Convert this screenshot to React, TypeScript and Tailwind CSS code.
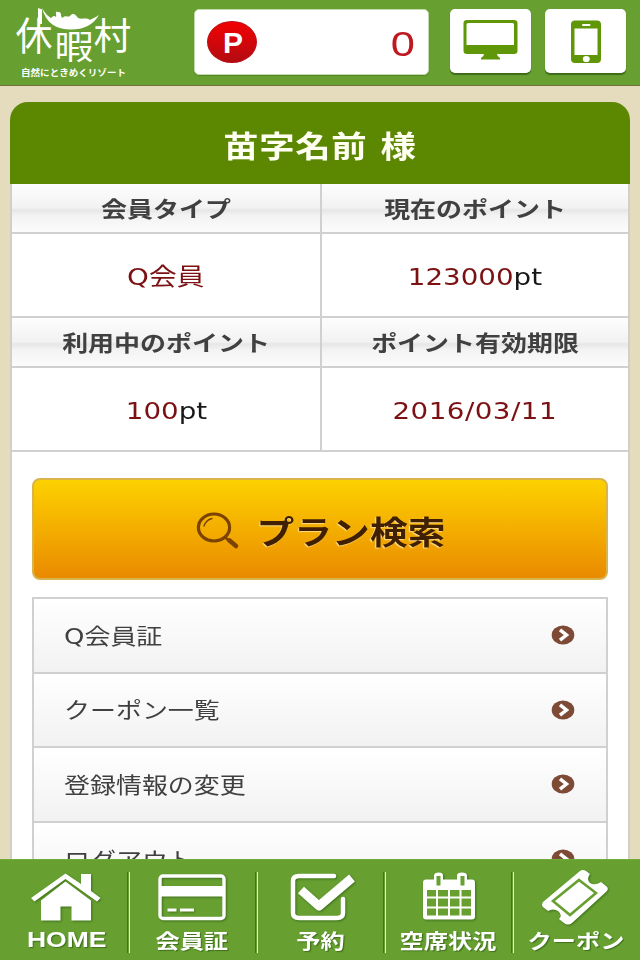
import type { ReactNode } from "react";
import clsx from "clsx";

interface InfoCell {
  label: string;
  value: string;
  unit?: string;
}

const INFO_ROWS: InfoCell[][] = [
  [
    { label: "会員タイプ", value: "Q会員" },
    { label: "現在のポイント", value: "123000", unit: "pt" },
  ],
  [
    { label: "利用中のポイント", value: "100", unit: "pt" },
    { label: "ポイント有効期限", value: "2016/03/11" },
  ],
];

const MENU = ["Q会員証", "クーポン一覧", "登録情報の変更", "ログアウト"];

const NAV = [
  { label: "HOME", icon: <HomeIcon /> },
  { label: "会員証", icon: <CardIcon /> },
  { label: "予約", icon: <CheckIcon /> },
  { label: "空席状況", icon: <CalendarIcon /> },
  { label: "クーポン", icon: <TicketIcon /> },
];

function Logo() {
  return (
    <svg width="180" height="84" viewBox="0 0 180 84" fill="#fff" className="shrink-0">
      <g fontFamily="'Noto Sans CJK JP', sans-serif" fontWeight="400">
        <text transform="translate(15.500 49.500) scale(0.95 1)" fontSize="39">休</text>
        <text transform="translate(54.500 58.500) scale(1.18 1)" fontSize="33">暇</text>
        <text transform="translate(93.500 49.500) scale(1.02 1)" fontSize="37">村</text>
        <text x="21" y="76" fontSize="9" fontWeight="700" textLength="105" lengthAdjust="spacingAndGlyphs">
          自然にときめくリゾート
        </text>
      </g>
      <path d="M38 8L42 9.500V24H38Z" />
      <path d="M42 8C48 19 57 23 70 23C83 23 92 20 99 15C93 25 84 29.500 71 29.500C56 29.500 46 23 42 8Z" />
      <path d="M50 19C53 16 54 15 56 17C57 14 54 11 58 12C62 12 60 14 62 18C66 14 68 18 70 16C73 12 76 15 78 18C82 20 86 17 90 20C84 26 59 27 50 19Z" />
    </svg>
  );
}

function MonitorIcon() {
  return (
    <svg width="56" height="40" viewBox="0 0 56 40" fill="#5f9708">
      <path
        fillRule="evenodd"
        d="M4 0H51Q54.500 0 54.500 3V31Q54.500 34 51 34H4Q.500 34 .500 31V3Q.500 0 4 0ZM5 3Q3.500 3 3.500 4.500V25H51V4.500Q51 3 49.500 3Z"
      />
      <path d="M21 34H34Q34 36.500 37 38V39.500H18V38Q21 36.500 21 34Z" />
    </svg>
  );
}

function PhoneIcon() {
  return (
    <svg width="32" height="44" viewBox="0 0 32 44">
      <rect x="1" y="0.500" width="30" height="42.500" rx="4" fill="#5f9708" />
      <rect x="4.500" y="8.500" width="23" height="26.500" fill="#fff" />
      <rect x="12" y="4" width="8.500" height="2" rx="1" fill="#fff" />
      <ellipse cx="16.300" cy="39" rx="3.500" ry="3.100" fill="#fff" />
    </svg>
  );
}

function SearchIcon() {
  return (
    <svg width="44" height="38" viewBox="0 0 44 38" fill="none" stroke="#7c4300" strokeLinecap="round">
      <ellipse cx="18" cy="15.500" rx="15.600" ry="13.500" strokeWidth="3.200" />
      <path d="M8 14Q10 8 16 6.500" strokeWidth="1.400" />
      <path d="M30 26L33 29" strokeWidth="2.500" />
      <path d="M33.500 28.500L40 34" strokeWidth="4.500" />
    </svg>
  );
}

function ArrowIcon() {
  return (
    <svg width="24" height="20" viewBox="0 0 24 20" fill="none">
      <ellipse cx="12" cy="10" rx="11.300" ry="9.500" fill="#7d4a35" />
      <path d="M9 4.800L15.500 10L9 15.200" stroke="#fff" strokeWidth="3.500" />
    </svg>
  );
}

function HomeIcon() {
  return (
    <svg width="70" height="50" viewBox="-2 0 70 50" fill="#fff" overflow="visible">
      <path d="M34.500 .500L50 11V1H60V18L69.500 25L66 28.500L34.500 6L3.500 28.500L0 25Z" />
      <path d="M34.500 8.500L60 27.500V47.500H40.500V33.500H29.500V47.500H10V27.500Z" />
    </svg>
  );
}

function CardIcon() {
  return (
    <svg width="70" height="50" viewBox="0 0 70 50">
      <rect x="3" y="3" width="64" height="42.500" rx="3" fill="none" stroke="#fff" strokeWidth="3.400" />
      <path d="M2 13H68V23.500H2ZM10.500 35.500H19.500V38.500H10.500ZM23 35.500H37V38.500H23Z" fill="#fff" />
    </svg>
  );
}

function CheckIcon() {
  return (
    <svg width="70" height="50" viewBox="-2 0 70 50" fill="none" stroke="#fff" overflow="visible">
      <path d="M47 3H12Q6 3 6 8V40Q6 45 12 45H50Q56 45 56 40V26" strokeWidth="4.500" strokeLinecap="round" />
      <path d="M14 17L32 33L65 5" strokeWidth="9" strokeLinejoin="round" />
    </svg>
  );
}

function CalendarIcon() {
  return (
    <svg width="70" height="50" viewBox="-1 1.500 70 50" overflow="visible">
      <path
        fill="#fff"
        d="M12 8H20V4Q20 1 25 1Q29 1 29 4V8H43V4Q43 1 48 1Q53 1 53 4V8H58Q61 8 61 11V45Q61 48 58 48H12Q9 48 9 45V11Q9 8 12 8Z"
      />
      <path
        fill="#67a031"
        d="M22.500 4.500H26.500V14H22.500ZM46.500 4.500H50.500V14H46.500ZM13 18.500H22V25H13ZM24 18.500H34V25H24ZM36 18.500H45.500V25H36ZM47.500 18.500H57V25H47.500ZM13 27H22V35H13ZM24 27H34V35H24ZM36 27H45.500V35H36ZM47.500 27H57V35H47.500ZM13 37H22V44H13ZM24 37H34V44H24ZM36 37H45.500V44H36ZM47.500 37H57V44H47.500Z"
      />
    </svg>
  );
}

function TicketIcon() {
  return (
    <svg width="70" height="58" viewBox="1 4 70 58" overflow="visible">
      <path
        fill="#fff"
        d="M40 2Q43 0 46 2L50 5Q46 10 50 14Q55 17 61 13L66 17Q69 19 67 22L32 54Q28 57 24 54L19 50Q23 46 18 42Q13 39 8 42L3 38Q1 36 3 33Z"
      />
      <path d="M39 11L56 24L30 46L13 32Z" fill="#fff" stroke="#67a031" strokeWidth="2.600" />
    </svg>
  );
}

// the type runs wider than its height everywhere in this skin
function Wide({ children, className }: { children: ReactNode; className?: string }) {
  return <span className={clsx("inline-block whitespace-nowrap scale-x-[1.18]", className)}>{children}</span>;
}

function Header() {
  return (
    <header className="flex h-[86px] shrink-0 items-start border-b border-[#72713d] bg-[#67a031]">
      <Logo />
      <div className="ml-[14px] mt-[9px] flex h-[66px] w-[235px] shrink-0 items-center justify-between rounded-[5px] border border-[#c3d9ad] bg-white pl-3 pr-[16px] shadow-[0_1px_1px_#548525]">
        <span className="flex h-[42px] w-[50px] items-center justify-center rounded-[50%] border border-[#b80c13] bg-linear-to-b from-[#f20000] to-[#b30a10] pl-0.5 pt-0.5 font-[Liberation_Sans,sans-serif] text-[30px] font-bold leading-none text-white">
          P
        </span>
        <span className="inline-block scale-x-[1.24] pt-0.5 font-[Liberation_Sans,sans-serif] text-[35px] leading-none text-[#bf1820]">
          0
        </span>
      </div>
      <button className="ml-[21px] mt-[9px] flex h-[64px] w-[81px] shrink-0 justify-center rounded-[5px] bg-white pt-[11px] shadow-[0_2px_1px_#3d6a19]">
        <MonitorIcon />
      </button>
      <button className="ml-[14px] mt-[9px] flex h-[64px] w-[81px] shrink-0 justify-center rounded-[5px] bg-white pt-[11px] shadow-[0_2px_1px_#3d6a19]">
        <PhoneIcon />
      </button>
    </header>
  );
}

function InfoTable() {
  return (
    <div>
      {INFO_ROWS.map((row) => (
        <div key={row[0].label} className="grid grid-cols-[310px_1fr]">
          {row.map((cell, i) => (
            <div key={cell.label} className={clsx("text-center", i === 0 && "border-r-2 border-[#d0d0d0]")}>
              <div className="flex h-[50px] items-center justify-center border-b-2 border-[#d0d0d0] bg-[linear-gradient(#fdfdfd_0%,#f2f2f3_50%,#e6e6e7_54%,#f3f3f4_66%,#fbfbfb_100%)] pb-0.5 text-[22px] font-bold text-[#404040]">
                <Wide>{cell.label}</Wide>
              </div>
              <div className="flex h-[84px] items-center justify-center border-b-2 border-[#d0d0d0] bg-white pt-1.5 font-[DejaVu_Sans,Noto_Sans_CJK_JP,sans-serif] text-[23.5px] text-[#7b1113]">
                <Wide className={clsx(cell.value.includes("/") && "tracking-[0.4px]")}>
                  {cell.value}
                  {cell.unit && <span className="text-[#181818]">{cell.unit}</span>}
                </Wide>
              </div>
            </div>
          ))}
        </div>
      ))}
    </div>
  );
}

export default function App() {
  return (
    <div className="flex h-[960px] w-[640px] flex-col overflow-hidden bg-[#e4dcbd] font-[Noto_Sans_CJK_JP,sans-serif]">
      <Header />
      <main className="min-h-0 flex-1 overflow-hidden px-[10px] pt-4">
        <h1 className="flex h-[82px] items-center justify-center rounded-t-[18px] bg-[#5c8700] pt-0.5 text-[30px] font-bold tracking-[0.5px] text-[#fffff2] [word-spacing:4px]">
          <Wide>苗字名前 様</Wide>
        </h1>
        <div className="h-[700px] border-x-2 border-[#d0d0cb] bg-white">
          <InfoTable />
          <div className="px-5 pt-[26px]">
            <button className="flex h-[102px] w-full items-center justify-center gap-[31px] rounded-[8px] border-2 border-[#d9b34b] bg-linear-to-b from-[#fcd100] to-[#e98a00] pr-[13px] pt-1 text-[32px] font-bold text-[#402000] [text-shadow:-1px_1px_1px_#ffdc8a]">
              <SearchIcon />
              <Wide className="relative -top-px">プラン検索</Wide>
            </button>
            <ul className="mt-[17px] border-2 border-[#d0d0d0]">
              {MENU.map((item) => (
                <li
                  key={item}
                  className="flex h-[74.600px] items-center justify-between border-b-2 border-[#d0d0d0] bg-linear-to-b from-white to-[#f2f2f2] pl-[30px] pr-[31px] text-[22px] text-[#404040]"
                >
                  <Wide className="origin-left pt-0.5 font-[DejaVu_Sans,Noto_Sans_CJK_JP,sans-serif]">{item}</Wide>
                  <ArrowIcon />
                </li>
              ))}
            </ul>
          </div>
        </div>
      </main>
      <nav className="grid h-[101px] shrink-0 grid-cols-5 border-t border-[#70ad36] bg-[#67a031]">
        {NAV.map((item, i) => (
          <a key={item.label} className="relative flex flex-col items-center pt-[13px] text-white">
            <span className="flex h-[52px] drop-shadow-[1px_1px_1px_#3f701b]">{item.icon}</span>
            <span
              className={clsx(
                "mt-[3px] h-6 font-bold leading-6 [text-shadow:1px_1px_1px_#3f701b]",
                item.label === "HOME" ? "pl-1.5 font-[Liberation_Sans,sans-serif] text-[22.500px]" : "text-[20.500px]"
              )}
            >
              <Wide>{item.label}</Wide>
            </span>
            {i < NAV.length - 1 && (
              <span className="absolute right-[-2px] top-3 h-[81px] w-[3px] border-l border-r border-l-[#47731f] border-r-[#e2efd0]" />
            )}
          </a>
        ))}
      </nav>
    </div>
  );
}
